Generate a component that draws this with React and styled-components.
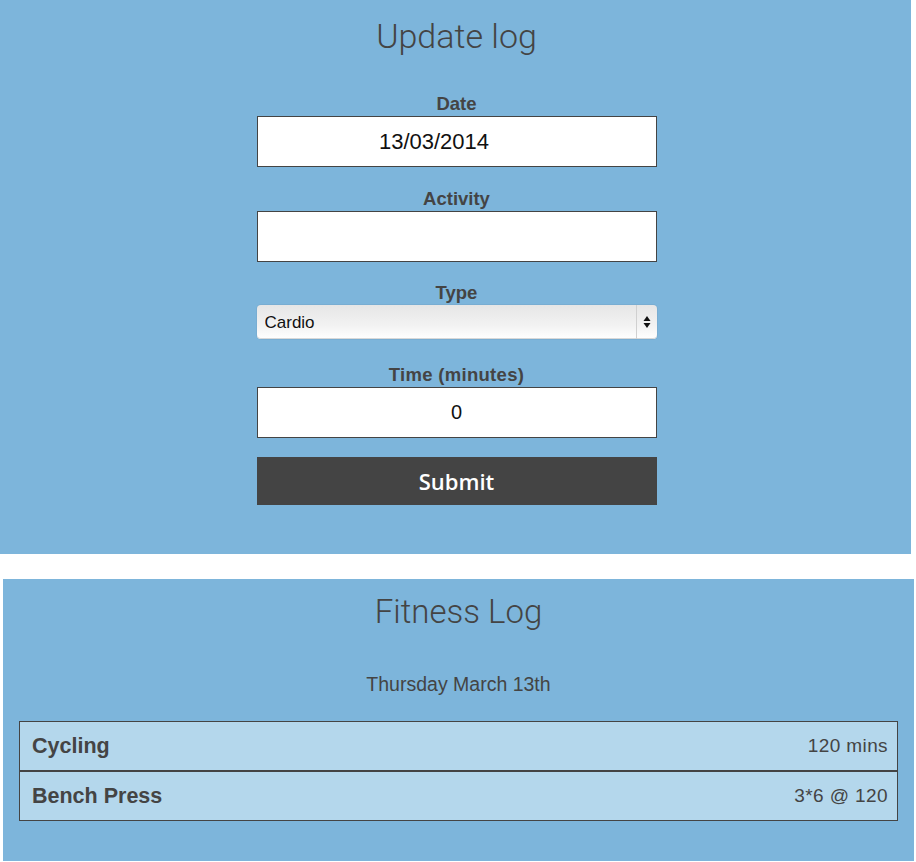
import React from "react";
import styled, { createGlobalStyle } from "styled-components";

const GlobalStyle = createGlobalStyle`
  body {
    margin: 0;
    background: #ffffff;
    font-family: "Liberation Sans", Arial, sans-serif;
    color: #444444;
  }
`;

const Page = styled.div`
  display: flex;
  flex-direction: column;
  gap: 25px;
  width: 916px;
`;

const Panel = styled.section`
  width: 911px;
  margin-left: ${(p) => p.offset || 0}px;
  background: #7db5db;
  box-sizing: border-box;
  padding: ${(p) => p.pad};
  display: flex;
  flex-direction: column;
  align-items: center;
`;

const Title = styled.h1`
  margin: 0;
  font-family: Roboto, "Liberation Sans", sans-serif;
  font-weight: 300;
  font-size: ${(p) => p.size || 33}px;
  line-height: 44px;
  color: #444444;
`;

const Form = styled.form`
  width: 400px;
  display: flex;
  flex-direction: column;
  margin-top: 36px;
`;

const Field = styled.div`
  display: flex;
  flex-direction: column;
  align-items: center;
  margin-bottom: ${(p) => p.space}px;
`;

const Label = styled.label`
  font-size: 18.5px;
  font-weight: bold;
  line-height: 20px;
  margin-bottom: 2px;
  color: #444444;
  letter-spacing: ${(p) => (p.wide ? "0.3px" : "0")};
`;

const TextInput = styled.input`
  width: 400px;
  height: 51px;
  box-sizing: border-box;
  border: 1px solid #444444;
  background: #ffffff;
  font-family: "Liberation Sans", Arial, sans-serif;
  font-size: ${(p) => p.fontSize || 20}px;
  color: #111111;
  text-align: center;
  padding: 0 ${(p) => p.shift || 0}px 0 0;
  outline: none;
`;

const SelectWrap = styled.div`
  position: relative;
  width: 400px;
  height: 34px;
`;

const Select = styled.select`
  appearance: none;
  width: 100%;
  height: 100%;
  border: none;
  border-radius: 4px;
  background: linear-gradient(#e6e6e6, #f2f2f2 60%, #ffffff);
  box-shadow: inset 0 -1px 0 #d8d8d8, 0 0 0 1px rgba(0, 0, 0, 0.04);
  font-family: "Liberation Sans", Arial, sans-serif;
  font-size: 17px;
  color: #111111;
  padding: 0 0 0 8px;
  outline: none;
`;

const Arrows = styled.div`
  position: absolute;
  top: 0;
  right: 0;
  width: 20px;
  height: 100%;
  border-left: 1px solid #d0d0d0;
  display: flex;
  align-items: center;
  justify-content: center;
  pointer-events: none;
`;

const SubmitButton = styled.button`
  margin-top: -3px;
  width: 400px;
  height: 48px;
  border: none;
  background: #444444;
  color: #ffffff;
  font-family: "Open Sans", sans-serif;
  font-weight: 600;
  font-size: 22px;
  line-height: 44px;
`;

const DayHeading = styled.div`
  margin-top: 39px;
  font-size: 19.5px;
  line-height: 22px;
  color: #444444;
`;

const LogList = styled.div`
  align-self: stretch;
  margin: 26px 16px 0 16px;
  display: flex;
  flex-direction: column;
`;

const LogRow = styled.div`
  height: 50px;
  box-sizing: border-box;
  border: 1px solid #444444;
  background: #b4d7ec;
  display: flex;
  align-items: center;
  justify-content: space-between;
  padding: 0 9px 0 12px;
`;

const Activity = styled.span`
  font-size: 21.5px;
  font-weight: bold;
  color: #444444;
`;

const Amount = styled.span`
  font-size: 19px;
  color: #444444;
  letter-spacing: 0.4px;
`;

const entries = [
  { name: "Cycling", amount: "120 mins" },
  { name: "Bench Press", amount: "3*6 @ 120" },
];

export default function App() {
  return (
    <Page>
      <GlobalStyle />
      <Panel pad="14px 0 49px 2px">
        <Title size={34}>Update log</Title>
        <Form onSubmit={(e) => e.preventDefault()}>
          <Field space={22}>
            <Label>Date</Label>
            <TextInput type="text" defaultValue="13/03/2014" fontSize={22} shift={45} />
          </Field>
          <Field space={21}>
            <Label>Activity</Label>
            <TextInput type="text" />
          </Field>
          <Field space={26}>
            <Label>Type</Label>
            <SelectWrap>
              <Select defaultValue="Cardio">
                <option>Cardio</option>
                <option>Strength</option>
              </Select>
              <Arrows>
                <svg width="8" height="14" viewBox="0 0 8 14">
                  <path d="M4 1 L7.5 6 L0.5 6 Z" fill="#111" />
                  <path d="M4 13 L7.5 8 L0.5 8 Z" fill="#111" />
                </svg>
              </Arrows>
            </SelectWrap>
          </Field>
          <Field space={22}>
            <Label wide>Time (minutes)</Label>
            <TextInput type="text" defaultValue="0" />
          </Field>
          <SubmitButton type="submit">Submit</SubmitButton>
        </Form>
      </Panel>
      <Panel offset={3} pad="11px 0 40px 0">
        <Title>Fitness Log</Title>
        <DayHeading>Thursday March 13th</DayHeading>
        <LogList>
          {entries.map((e) => (
            <LogRow key={e.name}>
              <Activity>{e.name}</Activity>
              <Amount>{e.amount}</Amount>
            </LogRow>
          ))}
        </LogList>
      </Panel>
    </Page>
  );
}
